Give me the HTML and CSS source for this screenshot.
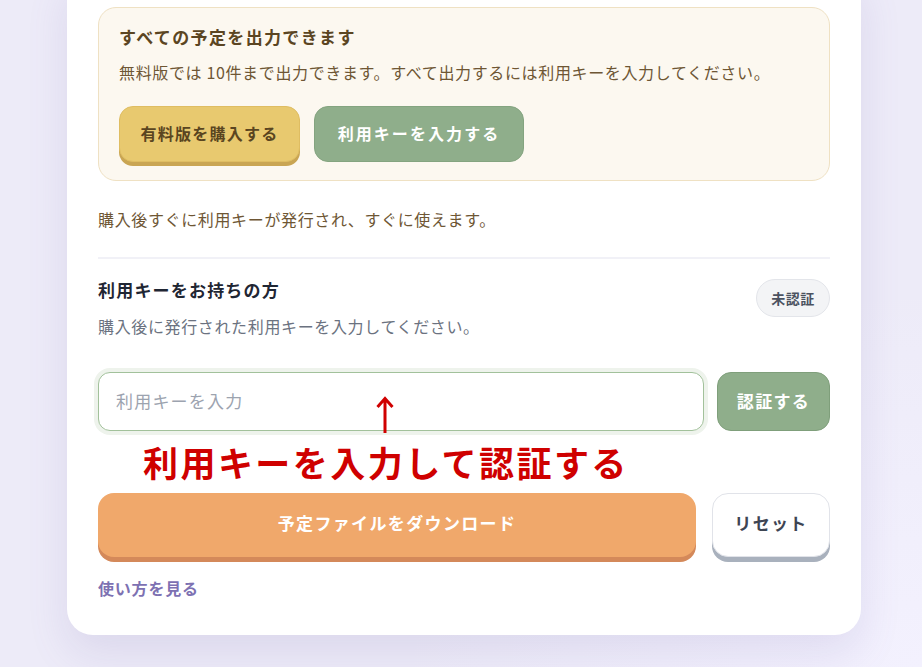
FILE: index.html
```html
<!DOCTYPE html>
<html lang="ja">
<head>
<meta charset="utf-8">
<title>予定ファイル出力</title>
<link rel="stylesheet" href="styles.css">
</head>
<body>
<main class="card">
  <section class="upgrade">
    <h2 class="upgrade-title">すべての予定を出力できます</h2>
    <p class="upgrade-text">無料版では 10件まで出力できます。すべて出力するには利用キーを入力してください。</p>
    <div class="upgrade-actions">
      <button class="btn btn-buy">有料版を購入する</button>
      <button class="btn btn-key">利用キーを入力する</button>
    </div>
  </section>
  <p class="note">購入後すぐに利用キーが発行され、すぐに使えます。</p>
  <hr class="divider">
  <section class="keyarea">
    <div class="key-head">
      <div>
        <h3 class="key-title">利用キーをお持ちの方</h3>
        <p class="key-desc">購入後に発行された利用キーを入力してください。</p>
      </div>
      <span class="badge">未認証</span>
    </div>
    <div class="key-row">
      <input class="key-input" type="text" placeholder="利用キーを入力">
      <button class="btn btn-verify">認証する</button>
      <svg class="arrow" width="20" height="40" viewBox="0 0 20 40" aria-hidden="true">
        <path d="M10 4 V38 M2.5 12 L10 3.5 L17.5 12" fill="none" stroke="#d00000" stroke-width="3" stroke-linejoin="miter"/>
      </svg>
    </div>
    <p class="annotation">利用キーを入力して認証する</p>
  </section>
  <div class="main-actions">
    <button class="btn btn-download">予定ファイルをダウンロード</button>
    <button class="btn btn-reset">リセット</button>
  </div>
  <a class="howto" href="#">使い方を見る</a>
</main>
</body>
</html>
```
FILE: styles.css
```css
* { box-sizing: border-box; }
html, body { height: 100%; }
body {
  margin: 0;
  padding: 0 61px 0 67px;
  background:
    radial-gradient(ellipse at 100% 100%, #f3f1fe 0%, rgba(243,241,254,0) 40%),
    #edebf8;
  font-family: "Noto Sans CJK JP", "Noto Sans", sans-serif;
  overflow: hidden;
}
.card {
  margin-top: -24px;
  background: #ffffff;
  border-radius: 0 0 26px 26px;
  padding: 31px 31px 35px;
  box-shadow: 0 18px 40px rgba(110, 100, 170, 0.14);
  display: flex;
  flex-direction: column;
}
.upgrade {
  background: #fcf8f0;
  border: 1px solid #efe1c3;
  border-radius: 18px;
  padding: 16px 20px 18px;
}
.upgrade-title {
  margin: 0;
  font-size: 17px;
  line-height: 25px;
  font-weight: 700;
  letter-spacing: 0.08em;
  color: #5b4522;
}
.upgrade-text {
  margin: 11px 0 0;
  font-size: 16px;
  line-height: 24px;
  letter-spacing: 0.04em;
  color: #6e5634;
}
.upgrade-actions {
  display: flex;
  gap: 14px;
  margin-top: 22px;
}
.btn {
  font-family: inherit;
  font-weight: 700;
  font-size: 16px;
  letter-spacing: 0.08em;
  border: none;
  border-radius: 14px;
  cursor: pointer;
}
.btn-buy {
  height: 56px;
  width: 181px;
  background: #e8c96f;
  color: #5a4520;
  border: 1px solid #dfbd62;
  box-shadow: 0 4px 0 #c9a553;
  padding-bottom: 3px;
}
.btn-key {
  height: 56px;
  width: 210px;
  background: #8fae8b;
  color: #ffffff;
  border: 1px solid #84a480;
  letter-spacing: 0.13em;
  padding-bottom: 3px;
}
.note {
  margin: 26px 0 0;
  font-size: 16px;
  line-height: 24px;
  letter-spacing: 0.04em;
  color: #6e5634;
}
.divider {
  margin: 26px 0 0;
  border: none;
  border-top: 2px solid #f1f1f7;
}
.keyarea {
  position: relative;
  margin-top: 19px;
}
.key-head {
  display: flex;
  justify-content: space-between;
  align-items: flex-start;
}
.key-title {
  margin: 0;
  font-size: 17px;
  line-height: 24px;
  font-weight: 700;
  letter-spacing: 0.07em;
  color: #1f2633;
}
.key-desc {
  margin: 12px 0 0;
  font-size: 16px;
  line-height: 24px;
  letter-spacing: 0.04em;
  color: #6b7280;
}
.badge {
  margin-top: 1px;
  display: inline-flex;
  align-items: center;
  justify-content: center;
  height: 38px;
  width: 74px;
  border-radius: 19px;
  background: #f3f4f6;
  border: 1px solid #e3e5ea;
  color: #4b5260;
  font-size: 14px;
  font-weight: 700;
  letter-spacing: 0.04em;
}
.key-row {
  position: relative;
  display: flex;
  gap: 13px;
  margin-top: 34px;
}
.key-input {
  flex: 1;
  height: 59px;
  border: 1px solid #a2c19b;
  border-radius: 12px;
  box-shadow: 0 0 0 4px #eef3ec;
  padding: 0 17px 3px;
  font-family: inherit;
  font-size: 17px;
  letter-spacing: 0.07em;
  color: #1f2633;
  outline: none;
  background: #ffffff;
}
.key-input::placeholder { color: #9ca3af; }
.btn-verify {
  width: 113px;
  height: 59px;
  background: #8fae8b;
  color: #ffffff;
  border: 1px solid #7f9f7b;
  font-size: 17px;
  padding-bottom: 4px;
}
.arrow {
  position: absolute;
  left: 277px;
  top: 23px;
}
.annotation {
  margin: 0;
  height: 62px;
  padding-left: 45px;
  font-size: 35px;
  line-height: 62px;
  font-weight: 700;
  letter-spacing: 0.07em;
  color: #cf0000;
}
.main-actions {
  display: flex;
  gap: 16px;
}
.btn-download {
  flex: 1;
  height: 64px;
  background: #f0a86b;
  color: #ffffff;
  box-shadow: 0 5px 0 #d4895a;
  font-size: 17px;
  border-radius: 16px;
  padding-bottom: 6px;
}
.btn-reset {
  width: 118px;
  height: 64px;
  background: #ffffff;
  border: 1px solid #e1e3e9;
  color: #3e4553;
  box-shadow: 0 5px 0 #a9b1bd;
  font-size: 17px;
  border-radius: 16px;
  padding-bottom: 6px;
}
.howto {
  margin-top: 19px;
  font-size: 16px;
  line-height: 24px;
  font-weight: 700;
  letter-spacing: 0.05em;
  color: #7d71b2;
  text-decoration: none;
  align-self: flex-start;
}
```
